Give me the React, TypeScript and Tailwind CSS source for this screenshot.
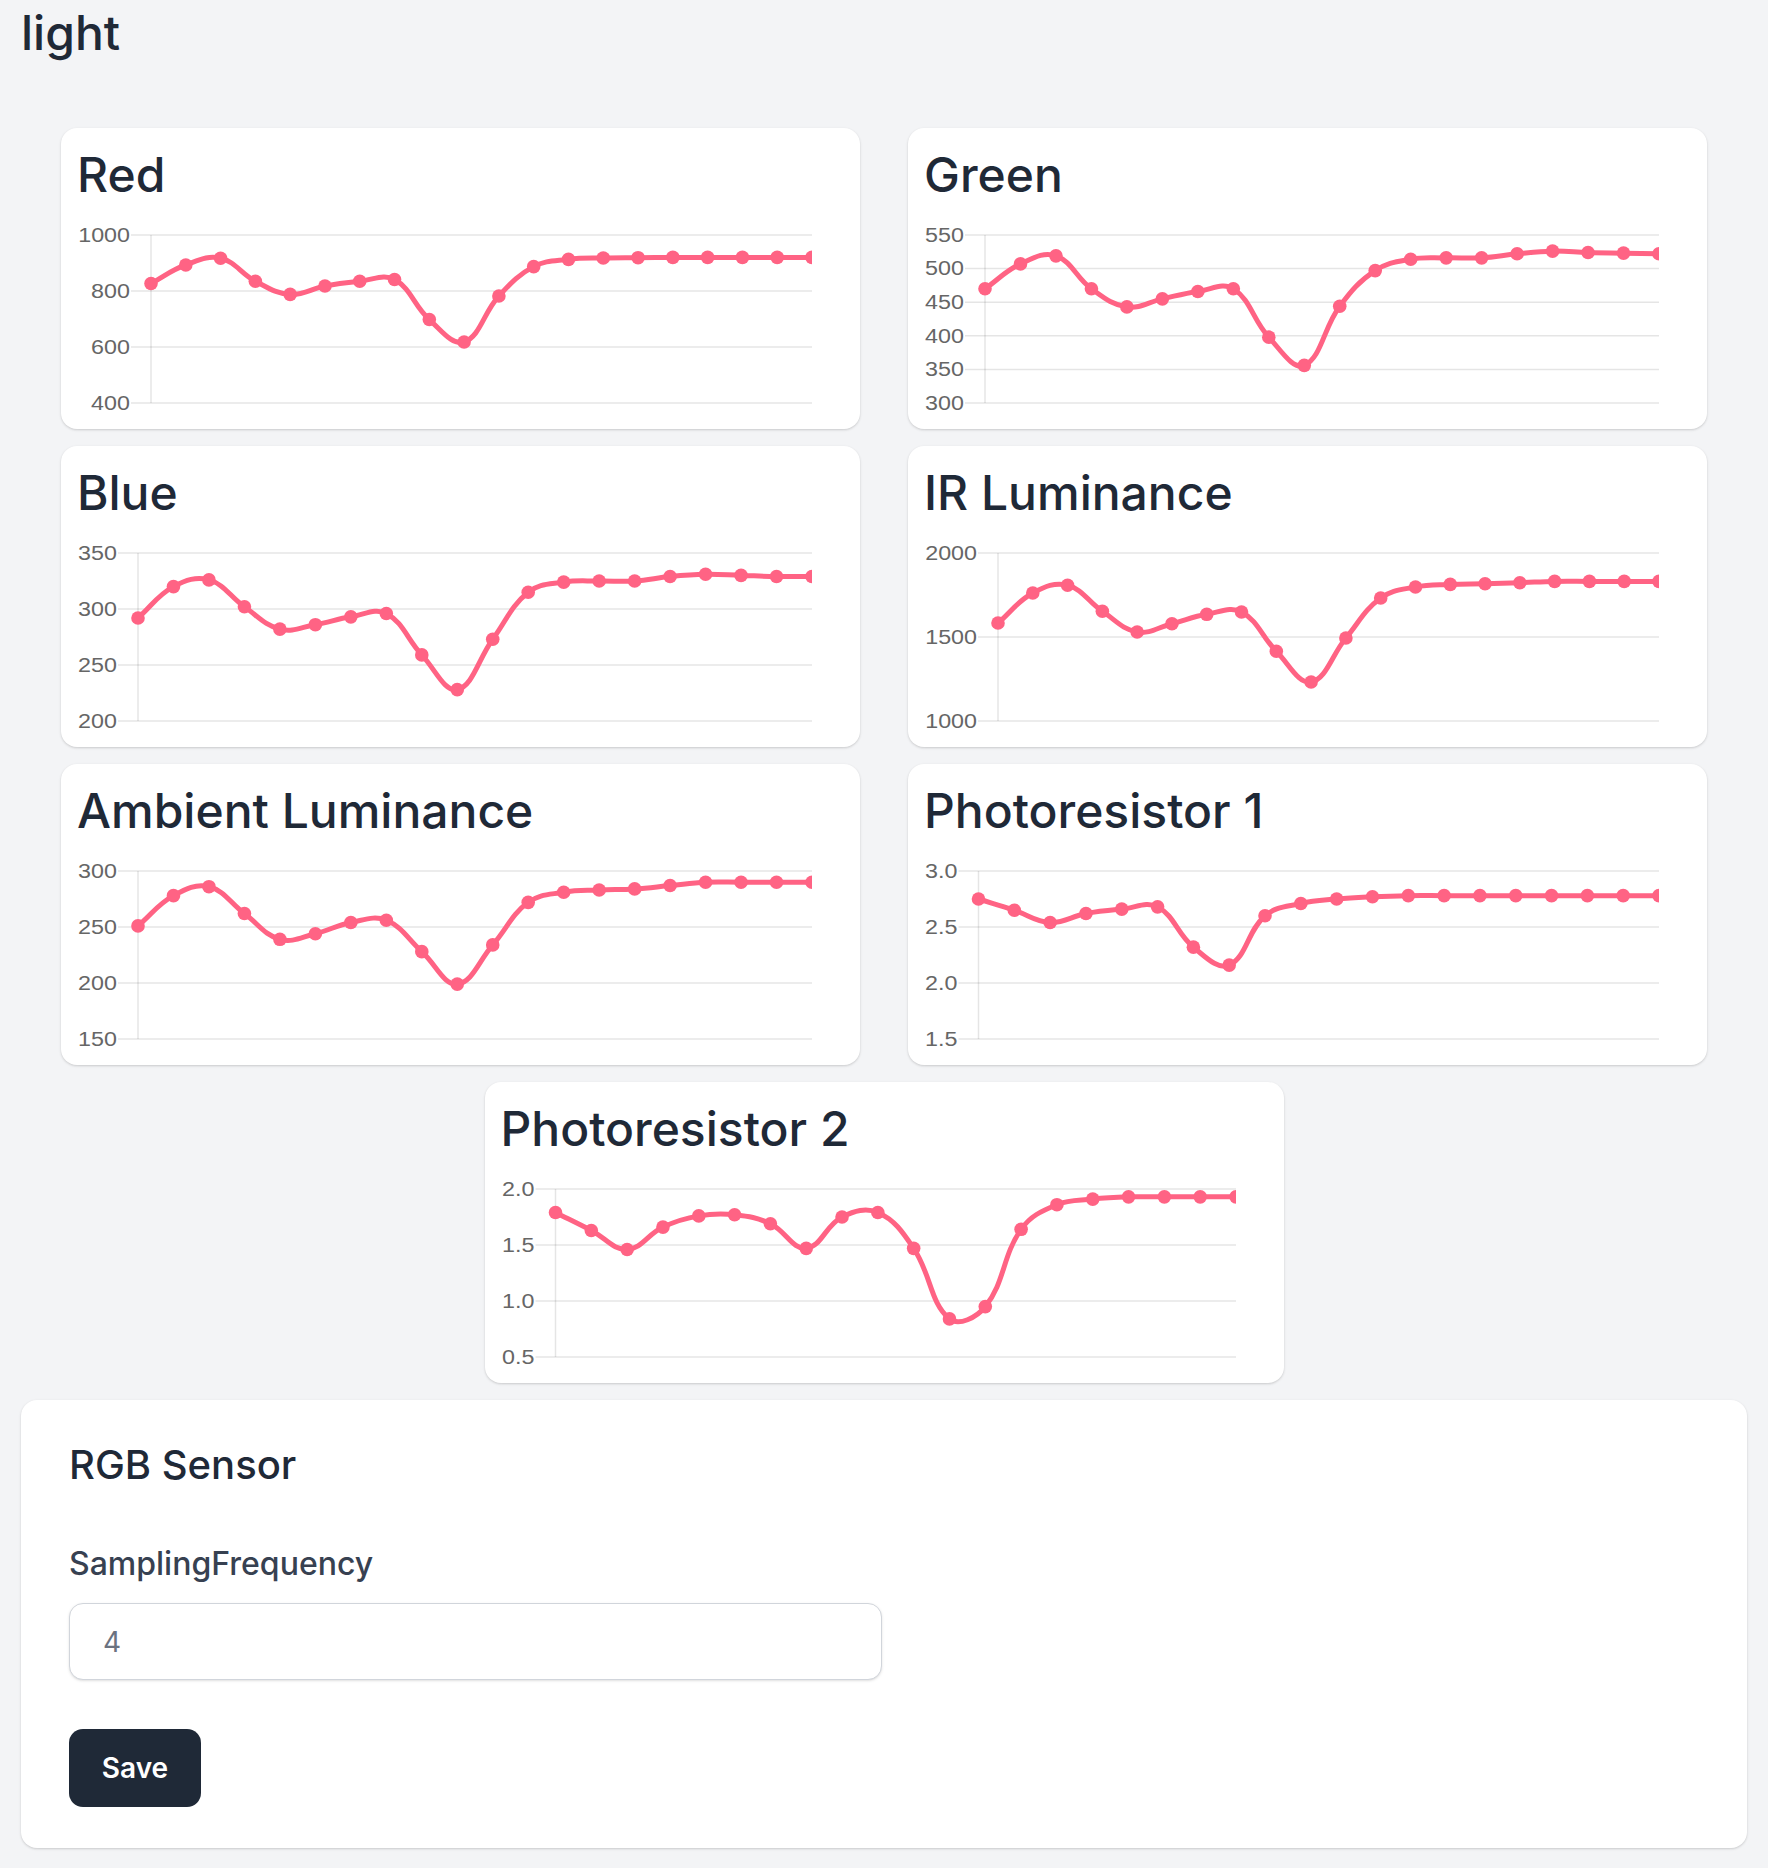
import React from "react";

type ChartDef = {
  title: string;
  ticks: number[];
  labels: string[];
  data: number[];
};

const charts: ChartDef[] = [
  {
    title: "Red",
    ticks: [400, 600, 800, 1000],
    labels: ["400", "600", "800", "1000"],
    data: [827, 893, 917, 835, 788, 818, 835, 841, 698, 618, 782, 887, 913, 918, 919, 920, 920, 920, 920, 920],
  },
  {
    title: "Green",
    ticks: [300, 350, 400, 450, 500, 550],
    labels: ["300", "350", "400", "450", "500", "550"],
    data: [470, 507, 519, 470, 443, 455, 466, 470, 398, 356, 444, 497, 514, 516, 516, 522, 526, 524, 523, 522],
  },
  {
    title: "Blue",
    ticks: [200, 250, 300, 350],
    labels: ["200", "250", "300", "350"],
    data: [292, 320, 326, 302, 282, 286, 293, 296, 259, 228, 273, 315, 324, 325, 325, 329, 331, 330, 329, 329],
  },
  {
    title: "IR Luminance",
    ticks: [1000, 1500, 2000],
    labels: ["1000", "1500", "2000"],
    data: [1583, 1762, 1808, 1653, 1530, 1579, 1635, 1649, 1415, 1232, 1494, 1732, 1798, 1813, 1817, 1823, 1831, 1831, 1831, 1831],
  },
  {
    title: "Ambient Luminance",
    ticks: [150, 200, 250, 300],
    labels: ["150", "200", "250", "300"],
    data: [251, 278, 286, 262, 239, 244, 254, 256, 228, 199, 234, 272, 281, 283, 284, 287, 290, 290, 290, 290],
  },
  {
    title: "Photoresistor 1",
    ticks: [1.5, 2.0, 2.5, 3.0],
    labels: ["1.5", "2.0", "2.5", "3.0"],
    data: [2.75, 2.65, 2.54, 2.62, 2.66, 2.68, 2.32, 2.16, 2.6, 2.71, 2.75, 2.77, 2.78, 2.78, 2.78, 2.78, 2.78, 2.78, 2.78, 2.78],
  },
  {
    title: "Photoresistor 2",
    ticks: [0.5, 1.0, 1.5, 2.0],
    labels: ["0.5", "1.0", "1.5", "2.0"],
    data: [1.79, 1.63, 1.46, 1.66, 1.76, 1.77, 1.69, 1.47, 1.75, 1.79, 1.47, 0.84, 0.95, 1.64, 1.86, 1.91, 1.93, 1.93, 1.93, 1.93],
  },
];

type Pt = { x: number; y: number };

function buildPath(pts: Pt[], t = 0.4): string {
  const n = pts.length;
  const cps = pts.map((cur, i) => {
    const prev = i > 0 ? pts[i - 1] : cur;
    const next = i < n - 1 ? pts[i + 1] : cur;
    const d01 = Math.hypot(cur.x - prev.x, cur.y - prev.y);
    const d12 = Math.hypot(next.x - cur.x, next.y - cur.y);
    let s01 = d01 / (d01 + d12);
    let s12 = d12 / (d01 + d12);
    if (isNaN(s01)) s01 = 0;
    if (isNaN(s12)) s12 = 0;
    const fa = t * s01;
    const fb = t * s12;
    return {
      prev: { x: cur.x - fa * (next.x - prev.x), y: cur.y - fa * (next.y - prev.y) },
      next: { x: cur.x + fb * (next.x - prev.x), y: cur.y + fb * (next.y - prev.y) },
    };
  });
  let d = `M ${pts[0].x} ${pts[0].y}`;
  for (let i = 1; i < n; i++) {
    const a = cps[i - 1].next;
    const b = cps[i].prev;
    d += ` C ${a.x} ${a.y} ${b.x} ${b.y} ${pts[i].x} ${pts[i].y}`;
  }
  return d;
}

function LineChart({ def, id }: { def: ChartDef; id: string }) {
  const W = 767;
  const H = 209;
  const top = 30;
  const bottom = 198;
  const right = 735;
  const charW = (s: string) => s.split("").reduce((a, c) => a + (c === "." ? 6.5 : 13), 0);
  const maxW = Math.max(...def.labels.map(charW));
  const axisX = maxW + 22;
  const min = def.ticks[0];
  const max = def.ticks[def.ticks.length - 1];
  const yOf = (v: number) => bottom - ((v - min) / (max - min)) * (bottom - top);
  const n = def.data.length;
  const pts = def.data.map((v, i) => ({ x: axisX + (i * (right - axisX)) / (n - 1), y: yOf(v) }));
  const path = buildPath(pts);
  return (
    <svg width={W} height={H} viewBox={`0 0 ${W} ${H}`} className="block">
      <defs>
        <clipPath id={id}>
          <rect x={0} y={0} width={right} height={H} />
        </clipPath>
      </defs>
      {def.ticks.map((t, i) => {
        const y = yOf(t);
        return (
          <g key={i}>
            <line x1={axisX - 20} x2={right} y1={y} y2={y} stroke="rgba(0,0,0,0.1)" strokeWidth={1.5} />
            <text
              transform={`translate(${maxW + 1} ${y + 6.8}) scale(1.11 1)`}
              textAnchor="end"
              fill="#666666"
              fontSize={21}
              fontFamily="'Liberation Sans', Arial, sans-serif"
            >
              {def.labels[i]}
            </text>
          </g>
        );
      })}
      <line x1={axisX} x2={axisX} y1={top} y2={bottom} stroke="rgba(0,0,0,0.1)" strokeWidth={1.5} />
      <g clipPath={`url(#${id})`}>
        <path d={path} fill="none" stroke="#ff6384" strokeWidth={5} strokeLinejoin="round" />
        {pts.map((p, i) => (
          <circle key={i} cx={p.x} cy={p.y} r={6.8} fill="#ff6384" />
        ))}
      </g>
    </svg>
  );
}

function ChartCard({ def, id }: { def: ChartDef; id: string }) {
  return (
    <div className="w-[799px] h-[301px] rounded-2xl bg-white p-4 shadow-[0_1px_3px_rgba(0,0,0,0.12),0_1px_2px_rgba(0,0,0,0.06)]">
      <h2 className="text-[48px] leading-[60px] font-medium text-[#1f2937] pt-[1px]">{def.title}</h2>
      <LineChart def={def} id={id} />
    </div>
  );
}

export default function App() {
  return (
    <div
      className="min-h-[1868px] bg-[#f3f4f6] px-[21px] pb-[20px]"
      style={{ fontFamily: "Inter, 'Noto Sans', sans-serif" }}
    >
      <h1 className="pt-[9px] text-[48px] leading-[48px] font-medium text-[#1f2937]">light</h1>
      <div className="mt-[71px] flex flex-wrap justify-center gap-x-[48px] gap-y-[17px] px-[40px]">
        {charts.map((c, i) => (
          <ChartCard key={c.title} def={c} id={`clip-${i}`} />
        ))}
      </div>
      <div className="mt-[17px] h-[448px] rounded-2xl bg-white px-12 pt-[41px] shadow-[0_1px_3px_rgba(0,0,0,0.12),0_1px_2px_rgba(0,0,0,0.06)]">
        <h3 className="text-[40px] leading-[48px] font-medium text-[#1f2937]">RGB Sensor</h3>
        <label className="mt-[56px] block text-[32px] leading-[38px] font-medium text-[#374151]">
          SamplingFrequency
        </label>
        <input
          type="text"
          defaultValue="4"
          className="mt-[20px] block h-[77px] w-[813px] rounded-[14px] border-[1.5px] border-[#d1d5db] bg-white px-[33px] text-[28px] text-[#6b7280] shadow-sm outline-none"
        />
        <button className="mt-[49px] block h-[78px] w-[132px] rounded-[14px] bg-[#1f2937] text-[28px] font-semibold text-white">
          Save
        </button>
      </div>
    </div>
  );
}
